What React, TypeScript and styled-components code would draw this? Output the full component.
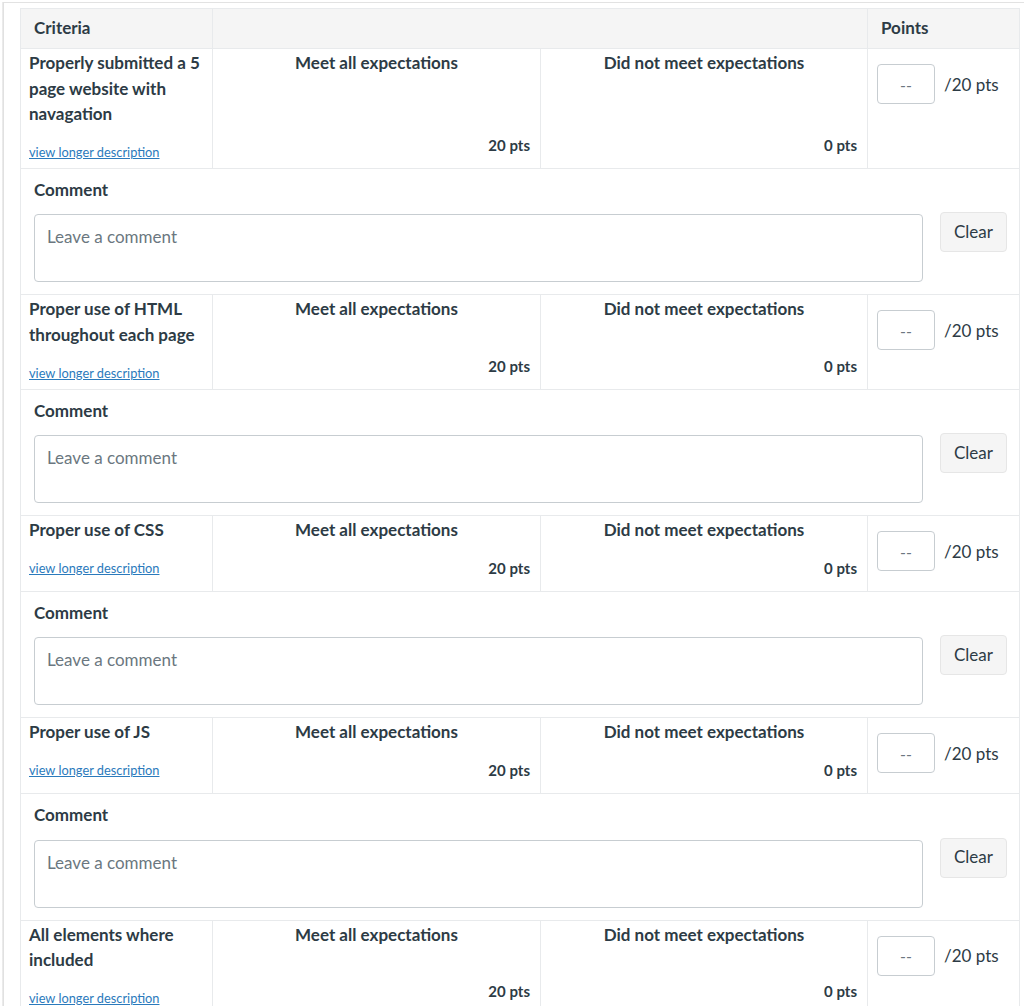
import React from "react";
import styled, { createGlobalStyle } from "styled-components";

const GlobalStyle = createGlobalStyle`
    html, body {
        margin: 0;
        padding: 0;
        background: #ffffff;
        overflow: hidden;
    }
    body {
        font-family: Lato, "Open Sans", "Liberation Sans", sans-serif;
        color: #2d3b45;
    }
`

type Criterion = {
    id: number;
    title: string;
    high: string;
    low: string;
    max: number;
}

const criteria: Criterion[] = [
    { id: 1, title: "Properly submitted a 5 page website with navagation", high: "Meet all expectations", low: "Did not meet expectations", max: 20 },
    { id: 2, title: "Proper use of HTML throughout each page", high: "Meet all expectations", low: "Did not meet expectations", max: 20 },
    { id: 3, title: "Proper use of CSS", high: "Meet all expectations", low: "Did not meet expectations", max: 20 },
    { id: 4, title: "Proper use of JS", high: "Meet all expectations", low: "Did not meet expectations", max: 20 },
    { id: 5, title: "All elements where included", high: "Meet all expectations", low: "Did not meet expectations", max: 20 },
]

const Page = styled.div`
    display: flex;
    min-height: 1006px;
    padding-top: 2px;
    box-sizing: border-box;
`

const Backdrop = styled.div`
    width: 4px;
    flex-shrink: 0;
    background: linear-gradient(to right, #ffffff 0, #ffffff 2px, #d6d6d6 3px, #ececec 4px);
`

const Tray = styled.div`
    flex: 1;
    border-top: 1px solid #e2e2e2;
    padding: 5px 4px 0 16px;
`

const Rubric = styled.div`
    width: 1000px;
    border: 1px solid #e8eaec;
    border-bottom: none;
    box-sizing: border-box;
`

const Row = styled.div<{ $head?: boolean }>`
    display: grid;
    grid-template-columns: 191px 328px 327px 1fr;
    border-bottom: 1px solid #e8eaec;
    background: ${p => p.$head ? "#f5f5f5" : "#ffffff"};
`

const HeadCell = styled.div<{ $divider?: boolean }>`
    height: 39px;
    box-sizing: border-box;
    display: flex;
    align-items: center;
    padding: 0 13px 3px 13px;
    font-size: 17px;
    font-weight: 700;
    border-left: ${p => p.$divider ? "1px solid #e8eaec" : "none"};
`

const CriterionCell = styled.div`
    padding: 1px 8px 7px 8px;
    display: flex;
    flex-direction: column;
    align-items: flex-start;
`

const CriterionTitle = styled.div`
    font-size: 17px;
    font-weight: 700;
    line-height: 25.6px;
`

const DescLink = styled.a`
    margin-top: 16px;
    font-size: 12.8px;
    line-height: 18px;
    color: #2b7abc;
    text-decoration: underline;
    cursor: pointer;
`

const RatingCell = styled.div`
    border-left: 1px solid #e8eaec;
    padding: 1px 10px 13px 10px;
    display: flex;
    flex-direction: column;
    justify-content: space-between;
`

const RatingTitle = styled.div`
    font-size: 17px;
    font-weight: 700;
    line-height: 25.6px;
    text-align: center;
    margin-bottom: 15px;
`

const RatingPoints = styled.div`
    font-size: 15px;
    font-weight: 700;
    line-height: 20px;
    text-align: right;
`

const PointsCell = styled.div`
    border-left: 1px solid #e8eaec;
    padding: 15px 9px 0 9px;
`

const PointsLine = styled.div`
    display: flex;
    align-items: center;
    gap: 9px;
    font-size: 17px;
`

const PointsInput = styled.input`
    width: 58px;
    height: 40px;
    box-sizing: border-box;
    border: 1px solid #c7cdd1;
    border-radius: 4px;
    text-align: center;
    font-family: inherit;
    font-size: 16px;
    color: #2d3b45;
    outline: none;

    &::placeholder {
        color: #6b7780;
    }
`

const CommentRow = styled.div`
    border-bottom: 1px solid #e8eaec;
    padding: 8px 12px 12px 13px;
`

const CommentLabel = styled.div`
    font-size: 17px;
    font-weight: 700;
    line-height: 25.6px;
    margin-bottom: 12px;
`

const CommentLine = styled.div`
    display: flex;
    align-items: flex-start;
`

const CommentBox = styled.textarea`
    width: 889px;
    height: 68px;
    box-sizing: border-box;
    padding: 9px 12px 10px;
    border: 1px solid #c7cdd1;
    border-radius: 4px;
    font-family: inherit;
    font-size: 17px;
    line-height: 25px;
    color: #2d3b45;
    resize: none;
    outline: none;
    display: block;

    &::placeholder {
        color: #6b7780;
    }
`

const ClearButton = styled.button`
    margin: -2px 0 0 17px;
    width: 67px;
    height: 40px;
    padding: 0 0 2px;
    background: #f5f5f5;
    border: 1px solid #e6e6e6;
    border-radius: 4px;
    font-family: inherit;
    font-size: 17px;
    color: #2d3b45;
    cursor: pointer;
`

const CriterionRows: React.FC<{ item: Criterion }> = ({ item }) => {
    return (
        <>
            <Row>
                <CriterionCell>
                    <CriterionTitle>{item.title}</CriterionTitle>
                    <DescLink>view longer description</DescLink>
                </CriterionCell>
                <RatingCell>
                    <RatingTitle>{item.high}</RatingTitle>
                    <RatingPoints>{item.max} pts</RatingPoints>
                </RatingCell>
                <RatingCell>
                    <RatingTitle>{item.low}</RatingTitle>
                    <RatingPoints>0 pts</RatingPoints>
                </RatingCell>
                <PointsCell>
                    <PointsLine>
                        <PointsInput placeholder="--" />
                        <span>/{item.max} pts</span>
                    </PointsLine>
                </PointsCell>
            </Row>
            {item.id < criteria.length && (
                <CommentRow>
                    <CommentLabel>Comment</CommentLabel>
                    <CommentLine>
                        <CommentBox placeholder="Leave a comment" />
                        <ClearButton>Clear</ClearButton>
                    </CommentLine>
                </CommentRow>
            )}
        </>
    )
}

export default function App() {
    return (
        <>
            <GlobalStyle />
            <Page>
                <Backdrop />
                <Tray>
                    <Rubric>
                        <Row $head>
                            <HeadCell>Criteria</HeadCell>
                            <HeadCell $divider style={{ gridColumn: "span 2" }} />
                            <HeadCell $divider>Points</HeadCell>
                        </Row>
                        {criteria.map(c => (
                            <CriterionRows key={c.id} item={c} />
                        ))}
                    </Rubric>
                </Tray>
            </Page>
        </>
    )
}
